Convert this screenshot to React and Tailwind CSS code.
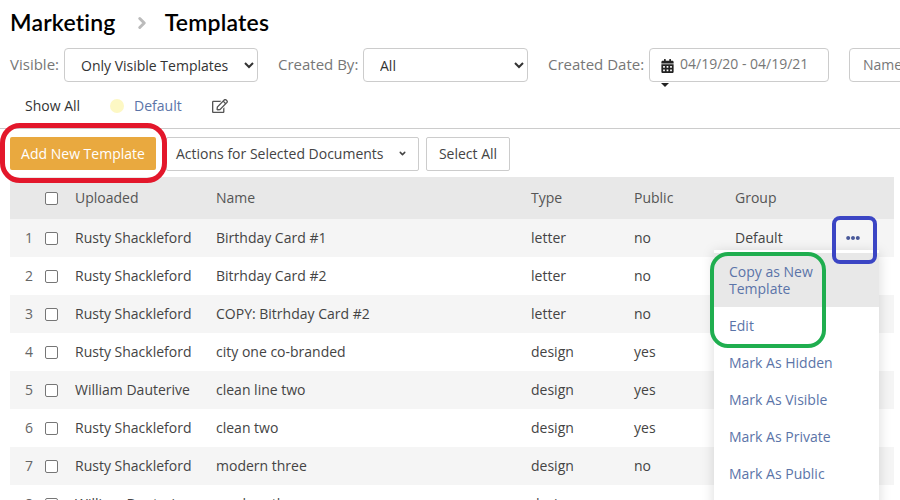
import React from "react"
import { ChevronDown, ChevronRight } from "lucide-react"
import { FaCalendarAlt, FaEllipsisH, FaRegEdit } from "react-icons/fa"

const rows = [
  { id: 1, by: "Rusty Shackleford", name: "Birthday Card #1", type: "letter", pub: "no", group: "Default" },
  { id: 2, by: "Rusty Shackleford", name: "Bitrhday Card #2", type: "letter", pub: "no", group: "" },
  { id: 3, by: "Rusty Shackleford", name: "COPY: Bitrhday Card #2", type: "letter", pub: "no", group: "" },
  { id: 4, by: "Rusty Shackleford", name: "city one co-branded", type: "design", pub: "yes", group: "" },
  { id: 5, by: "William Dauterive", name: "clean line two", type: "design", pub: "yes", group: "" },
  { id: 6, by: "Rusty Shackleford", name: "clean two", type: "design", pub: "yes", group: "" },
  { id: 7, by: "Rusty Shackleford", name: "modern three", type: "design", pub: "no", group: "" },
  { id: 8, by: "William Dauterive", name: "modern three", type: "design", pub: "no", group: "" },
]

const menuItems = ["Edit", "Mark As Hidden", "Mark As Visible", "Mark As Private", "Mark As Public"]

const gridCols = "grid grid-cols-[35px_30px_141px_315px_103px_101px_1fr] items-center"

const Checkbox = () => (
  <span className="block w-[13px] h-[13px] rounded-[2px] border border-[#767676] bg-white"></span>
)

const App = () => {
  return (
    <div className="relative w-[900px] h-[500px] overflow-hidden bg-white text-sm text-[#444] font-['Open_Sans',sans-serif]">
      {/* page title */}
      <div className="flex items-center h-[48px] pl-[10px] pb-[3px] text-[23px] tracking-[0.2px] font-semibold text-black font-['Lato',sans-serif]">
        <span>Marketing</span>
        <ChevronRight className="w-[18px] h-[18px] ml-[17px] mr-[14px] text-[#bbb]" strokeWidth={4} />
        <span>Templates</span>
      </div>

      {/* filters */}
      <div className="flex items-center h-[34px] pl-[10px] text-[15px] text-[#777] whitespace-nowrap">
        <span className="w-[54px] shrink-0">Visible:</span>
        <select className="w-[194px] h-[34px] shrink-0 pl-[12px] pr-[10px] rounded border border-[#ccc] bg-white text-sm text-[#333]">
          <option>Only Visible Templates</option>
        </select>
        <span className="w-[85px] ml-[20px] shrink-0">Created By:</span>
        <select className="w-[165px] h-[34px] shrink-0 pl-[12px] rounded border border-[#ccc] bg-white text-sm text-[#333]">
          <option>All</option>
        </select>
        <span className="w-[101px] ml-[20px] shrink-0">Created Date:</span>
        <div className="relative flex items-center w-[180px] h-[34px] shrink-0 pl-[11px] pb-[2px] rounded border border-[#ccc] text-sm">
          <FaCalendarAlt className="w-[13px] h-[14px] mt-[3px] mr-[6px] text-[#222]" />
          <span>04/19/20 - 04/19/21</span>
          <span className="absolute left-[11px] top-[34px] w-0 h-0 border-x-[4px] border-x-transparent border-t-[4px] border-t-[#222]"></span>
        </div>
        <div className="w-[120px] h-[34px] ml-[20px] shrink-0 flex items-center pl-[13px] rounded border border-[#ccc] text-sm text-[#777]">
          Name
        </div>
      </div>

      {/* group tabs */}
      <div className="flex items-center h-[47px] pt-[1px] pl-[25px] border-b border-[#ccc]">
        <span className="text-[#333]">Show All</span>
        <span className="w-[14px] h-[14px] ml-[30px] rounded-full bg-[#fdf8c4]"></span>
        <a className="ml-[10px] text-[#5b74a8]">Default</a>
        <FaRegEdit className="w-[16px] h-[16px] ml-[30px] text-[#555]" />
      </div>

      {/* action buttons */}
      <div className="flex items-center h-[33px] mt-[8px] pl-[10px]">
        <button className="w-[146px] h-[33px] rounded-[2px] bg-[#e9a93f] text-white">Add New Template</button>
        <button className="flex items-center w-[253px] h-[34px] ml-[10px] pl-[9px] border border-[#ccc] rounded-[2px] text-[#444]">
          Actions for Selected Documents
          <ChevronDown className="w-[9px] h-[9px] ml-[14px]" strokeWidth={4} />
        </button>
        <button className="w-[84px] h-[34px] ml-[7px] border border-[#ccc] rounded-[2px] text-[#444]">Select All</button>
      </div>

      {/* table */}
      <div className="mt-[7px] ml-[10px] mr-[6px]">
        <div className={`${gridCols} h-[42px] bg-[#e8e8e8] text-[#555]`}>
          <span></span>
          <Checkbox />
          <span>Uploaded</span>
          <span>Name</span>
          <span>Type</span>
          <span>Public</span>
          <span>Group</span>
        </div>
        {rows.map((row) => (
          <div key={row.id} className={`${gridCols} h-[38px] ${row.id % 2 === 1 ? "bg-[#f5f5f5]" : "bg-white"}`}>
            <span className="pl-[15px] text-[#666]">{row.id}</span>
            <Checkbox />
            <span>{row.by}</span>
            <span>{row.name}</span>
            <span>{row.type}</span>
            <span>{row.pub}</span>
            <span className="flex items-center justify-between pr-[34px]">
              {row.group}
              {row.id === 1 && <FaEllipsisH className="w-[14px] h-[14px] text-[#4a5a9a]" />}
            </span>
          </div>
        ))}
      </div>

      {/* row menu */}
      <div className="absolute left-[714px] top-[250px] w-[165px] h-[260px] pt-[3px] bg-white text-[#5b74a8] shadow-[0_2px_12px_rgba(0,0,0,0.15)]">
        <div className="px-[15px] py-[10px] bg-[#e8e8e8] leading-[17px]">Copy as New Template</div>
        {menuItems.map((item) => (
          <div key={item} className="h-[37px] flex items-center px-[15px]">{item}</div>
        ))}
      </div>

      {/* hand drawn callouts */}
      <div className="absolute left-0 top-[123px] w-[167px] h-[60px] rounded-[20px] border-[5px] border-[#e3172b]"></div>
      <div className="absolute left-[832px] top-[216px] w-[45px] h-[48px] rounded-[8px] border-[4px] border-[#3b45c4]"></div>
      <div className="absolute left-[710px] top-[252px] w-[116px] h-[96px] rounded-[18px] border-[4px] border-[#1fae4f]"></div>
    </div>
  )
}

export default App
